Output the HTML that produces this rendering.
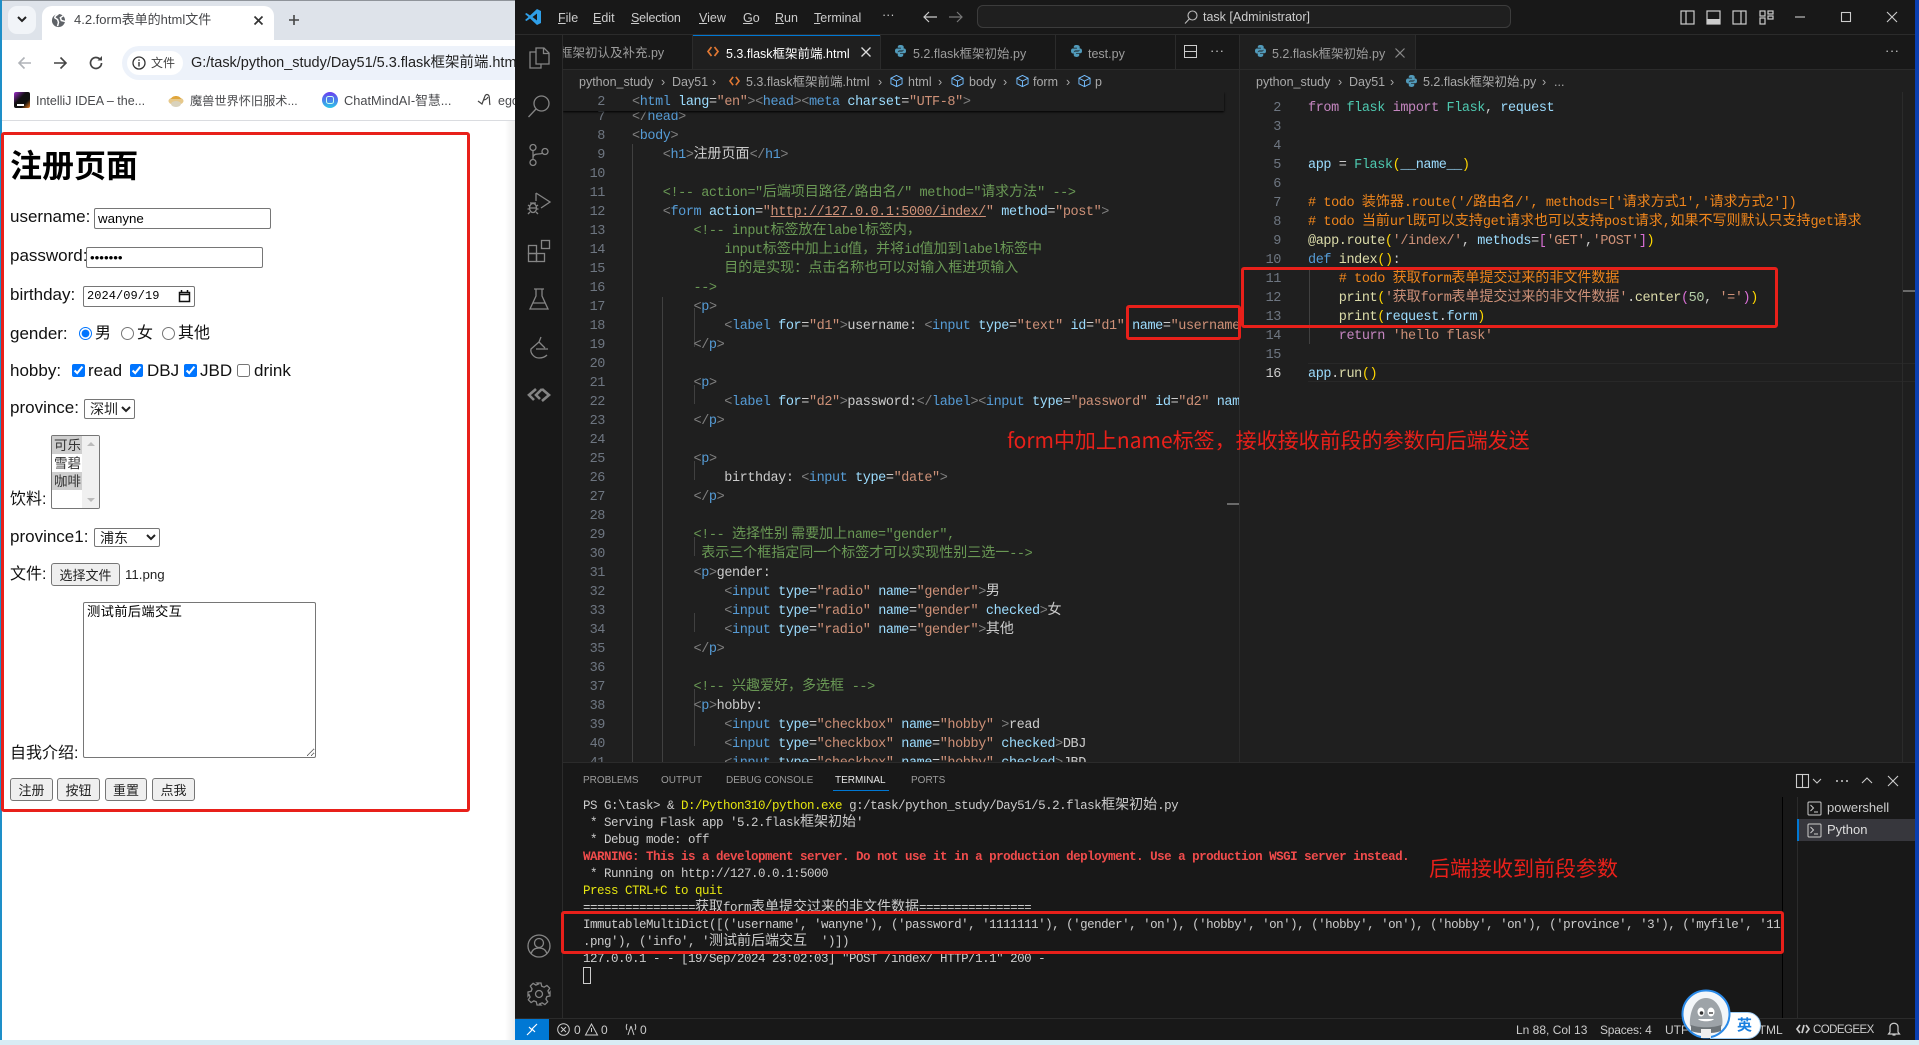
<!DOCTYPE html>
<html lang="zh-CN">
<head>
<meta charset="utf-8">
<title>4.2.form表单的html文件</title>
<style>
html,body{margin:0;padding:0}
body{position:relative;width:1919px;height:1045px;overflow:hidden;background:#d8ecf4;font-family:"Liberation Sans","Noto Sans CJK SC",sans-serif}
.p{position:absolute}
.t{position:absolute;white-space:nowrap}
svg{position:absolute;overflow:visible}
i{font-style:normal}
/* chrome */
.ct{font-size:13px;line-height:20px;color:#48494c}
.f{font-size:17px;line-height:24px;color:#111}
input,select,textarea,button{position:absolute;margin:0;box-sizing:border-box;font-family:"Liberation Sans","Noto Sans CJK SC",sans-serif}
input[type=text],input[type=password]{border:1px solid #767676;border-radius:2px;padding:1px 3px;font-size:13.3px;background:#fff;color:#000}
input[type=radio],input[type=checkbox]{width:13px;height:13px;accent-color:#0075ff}
select{border:1px solid #767676;border-radius:2px;background:#fff;font-size:14px;color:#222;padding:0 0 0 1px}
button{border:1px solid #767676;border-radius:3px;background:#efefef;font-size:13px;color:#222;padding:0}
/* code */
pre{position:absolute;margin:0;white-space:pre}
.cd{font-family:"Liberation Mono","Noto Sans CJK SC",monospace;font-size:13.5px;letter-spacing:-.41px;line-height:19px;color:#ccc}
.cd i{font-family:"Noto Sans CJK SC",sans-serif;font-size:14px;letter-spacing:0;line-height:0}
.ln{font-family:"Liberation Mono",monospace;font-size:13.5px;letter-spacing:-.41px;line-height:19px;color:#6e7681;text-align:right;position:absolute;margin:0;white-space:pre}
.b{color:#808080}.g{color:#569cd6}.a{color:#9cdcfe}.s{color:#ce9178}.c{color:#6a9955}
.k{color:#c586c0}.h{color:#4ec9b0}.y{color:#dcdcaa}.o{color:#f0861c}.n{color:#b5cea8}.d{color:#ffd700}.e{color:#da70d6}
.tm{font-family:"Liberation Mono","Noto Sans CJK SC",monospace;font-size:12.5px;letter-spacing:-.5px;line-height:17px;color:#ccc}
.tm i{font-family:"Noto Sans CJK SC",sans-serif;font-size:14px;letter-spacing:0;line-height:0}
.r{color:#f14c4c;font-weight:bold}.yl{color:#e5e510}
.tab{font-size:12.5px;line-height:20px;color:#9d9d9d}
.bc{font-size:12.5px;line-height:18px;color:#a9a9a9}
.mn{font-size:12.5px;line-height:18px;color:#cccccc}
.pt{font-size:10px;line-height:14px;color:#9d9d9d}
.st{font-size:12px;line-height:16px;color:#ccc}
.rb{position:absolute;box-sizing:border-box;border:3px solid #e8201a;border-radius:3px}
.an{position:absolute;white-space:nowrap;color:#e8201a;font-family:"Noto Sans CJK SC",sans-serif}
.ig{position:absolute;width:1px;background:#404040}
</style>
</head>
<body>

<!-- Desktop strips -->
<div class="p" style="left:0;top:0;width:2px;height:1040px;background:#1e8fc8"></div>
<div class="p" style="left:1915px;top:0;width:4px;height:1040px;background:#0a3fb0"></div>

<!-- Chrome window -->
<div class="p" style="left:2px;top:0;width:513px;height:1040px;background:#fff"></div>
<div class="p" style="left:2px;top:0;width:513px;height:40px;background:#dee3ea;border-top:1px solid #8f949a;box-sizing:border-box"></div>
<div class="p" style="left:8px;top:6px;width:28px;height:28px;background:#f1f4f8;border-radius:9px"></div>
<svg style="left:16px;top:15px" width="12" height="9" viewBox="0 0 12 9"><path d="M2 2l4 4 4-4" fill="none" stroke="#222" stroke-width="2"/></svg>
<div class="p" style="left:42px;top:6px;width:232px;height:34px;background:#fff;border-radius:10px 10px 0 0"></div>
<svg style="left:51px;top:13px" width="15" height="15" viewBox="0 0 16 16"><circle cx="8" cy="8" r="7" fill="#5f6368"/><path d="M8 1c-2 1-4 2-4 4l3 2 1 3-1 4M13 3l-3 2 1 3 4 1" fill="none" stroke="#fff" stroke-width="1.6"/></svg>
<div class="t ct" style="left:74px;top:10px;font-size:13px;color:#46474a">4.2.form表单的html文件</div>
<svg style="left:253px;top:15px" width="11" height="11" viewBox="0 0 11 11"><path d="M1.5 1.5l8 8M9.5 1.5l-8 8" stroke="#333" stroke-width="1.7"/></svg>
<svg style="left:288px;top:14px" width="12" height="12" viewBox="0 0 12 12"><path d="M6 1v10M1 6h10" stroke="#444" stroke-width="1.6"/></svg>
<svg style="left:16px;top:54px" width="18" height="18" viewBox="0 0 18 18"><path d="M15 9H3.5M8.5 3.5L3 9l5.5 5.5" fill="none" stroke="#b0b3b8" stroke-width="1.6"/></svg>
<svg style="left:51px;top:54px" width="18" height="18" viewBox="0 0 18 18"><path d="M3 9h11.5M9.5 3.5L15 9l-5.500 5.500" fill="none" stroke="#444" stroke-width="1.6"/></svg>
<svg style="left:87px;top:54px" width="18" height="18" viewBox="0 0 18 18"><path d="M14.500 9a5.500 5.500 0 1 1-1.600-3.900" fill="none" stroke="#444" stroke-width="1.7"/><path d="M15 2v4.500h-4.500z" fill="#444"/></svg>
<div class="p" style="left:122px;top:46px;width:393px;height:34px;background:#edf2fa;border-radius:17px 0 0 17px"></div>
<div class="p" style="left:127px;top:51px;width:56px;height:24px;background:#fff;border-radius:12px"></div>
<svg style="left:132px;top:56px" width="14" height="14" viewBox="0 0 14 14"><circle cx="7" cy="7" r="6" fill="none" stroke="#333" stroke-width="1.300"/><path d="M7 6v4.500M7 3.500v1.400" stroke="#333" stroke-width="1.400"/></svg>
<div class="t" style="left:151px;top:53px;font-size:12px;line-height:20px;color:#444">文件</div>
<div class="p" style="left:191px;top:50px;width:324px;height:26px;overflow:hidden"><div class="t" style="left:0;top:1px;font-size:14.500px;line-height:24px;color:#222;letter-spacing:-.02px">G:/task/python_study/Day51/5.3.flask框架前端.html</div></div>
<!-- bookmarks -->
<div class="p" style="left:14px;top:92px;width:16px;height:16px;background:linear-gradient(135deg,#a02bd0,#111 40%,#111 70%,#f08020);border-radius:2px"></div>
<div class="p" style="left:17px;top:104px;width:7px;height:1.500px;background:#fff"></div>
<div class="t ct" style="left:36px;top:91px;font-size:12.500px">IntelliJ IDEA – the...</div>
<svg style="left:168px;top:93px" width="16" height="15" viewBox="0 0 16 15"><ellipse cx="8" cy="8" rx="7.500" ry="4" fill="#e6c88a"/><path d="M3 6c1-4 9-4 10 0z" fill="#e0a63c"/><ellipse cx="8" cy="11" rx="5" ry="3" fill="#d9d2bc"/></svg>
<div class="t ct" style="left:190px;top:91px;font-size:12.200px">魔兽世界怀旧服术...</div>
<svg style="left:322px;top:92px" width="16" height="16" viewBox="0 0 16 16"><defs><linearGradient id="gm" x1="0" y1="0" x2="0" y2="1"><stop offset="0" stop-color="#6a3df0"/><stop offset="1" stop-color="#2bc6e8"/></linearGradient></defs><circle cx="8" cy="8" r="8" fill="url(#gm)"/><rect x="4.500" y="4.500" width="7" height="7" rx="2" fill="none" stroke="#cfe" stroke-width="1"/></svg>
<div class="t ct" style="left:344px;top:91px;font-size:12.800px">ChatMindAI-智慧...</div>
<svg style="left:477px;top:92px" width="15" height="16" viewBox="0 0 15 16"><path d="M1 9l4 3 3-8c1-2 3-2 4 0 1 3 0 6 1 9M6 8c2 0 4-1 5-3" fill="none" stroke="#444" stroke-width="1.200"/></svg>
<div class="p" style="left:498px;top:91px;width:17px;height:20px;overflow:hidden"><div class="t ct" style="left:0;top:0;font-size:12.500px">ego</div></div>
<div class="p" style="left:2px;top:120px;width:513px;height:1px;background:#dadce0"></div>
<div class="p" style="left:505px;top:121px;width:10px;height:919px;background:linear-gradient(90deg,rgba(235,235,235,0),#ececec)"></div>

<!-- Form page -->
<div class="t" style="left:10px;top:140px;font-size:32px;line-height:48px;font-weight:bold;color:#000;font-family:'Noto Sans CJK SC',sans-serif">注册页面</div>

<div class="t f" style="left:10px;top:205px">username:</div>
<input type="text" value="wanyne" style="left:94px;top:208px;width:177px;height:21px">
<div class="t f" style="left:10px;top:244px">password:</div>
<input type="password" value="1111111" style="left:86px;top:247px;width:177px;height:21px">
<div class="t f" style="left:10px;top:283px">birthday:</div>
<div class="p" style="left:83px;top:286px;width:112px;height:21px;box-sizing:border-box;border:1px solid #767676;border-radius:2px;background:#fff"></div>
<div class="t" style="left:87px;top:288px;font-size:12px;line-height:17px;letter-spacing:.05px;font-family:'Liberation Mono',monospace;color:#000">2024/09/19</div>
<svg style="left:178px;top:289px" width="13" height="14" viewBox="0 0 13 14"><path d="M1.500 3.500h10v9h-10zM1.500 5.500h10" fill="none" stroke="#111" stroke-width="1.500"/><path d="M3.500 1v2.500M9.500 1v2.500" stroke="#111" stroke-width="1.500"/></svg>

<div class="t f" style="left:10px;top:322px">gender:</div>
<input type="radio" name="x" checked style="left:79px;top:327px">
<div class="t f" style="left:95px;top:322px;font-size:16px">男</div>
<input type="radio" name="x" style="left:121px;top:327px">
<div class="t f" style="left:137px;top:322px;font-size:16px">女</div>
<input type="radio" name="x" style="left:162px;top:327px">
<div class="t f" style="left:178px;top:322px;font-size:16px">其他</div>

<div class="t f" style="left:10px;top:359px">hobby:</div>
<input type="checkbox" checked style="left:72px;top:364px">
<div class="t f" style="left:88px;top:359px">read</div>
<input type="checkbox" checked style="left:130px;top:364px">
<div class="t f" style="left:147px;top:359px">DBJ</div>
<input type="checkbox" checked style="left:184px;top:364px">
<div class="t f" style="left:200px;top:359px">JBD</div>
<input type="checkbox" style="left:237px;top:364px">
<div class="t f" style="left:254px;top:359px">drink</div>

<div class="t f" style="left:10px;top:396px">province:</div>
<select style="left:84px;top:399px;width:51px;height:20px"><option>深圳</option></select>

<div class="t f" style="left:10px;top:488px;font-size:16px">饮料:</div>
<div class="p" style="left:51px;top:435px;width:49px;height:74px;box-sizing:border-box;border:1px solid #767676;border-radius:2px;background:#fff;overflow:hidden">
  <div class="p" style="left:0;top:0;width:30px;height:18px;background:#cecece"></div>
  <div class="p" style="left:0;top:36px;width:30px;height:18px;background:#cecece"></div>
  <div class="p" style="left:30px;top:0;width:18px;height:74px;background:#f0f0f0"></div>
  <div class="t" style="left:2px;top:1px;font-size:13.500px;line-height:18px;color:#333">可乐</div>
  <div class="t" style="left:2px;top:19px;font-size:13.500px;line-height:18px;color:#333">雪碧</div>
  <div class="t" style="left:2px;top:37px;font-size:13.500px;line-height:18px;color:#333">咖啡</div>
  <div class="p" style="left:35px;top:6px;width:0;height:0;border:4px solid transparent;border-bottom-color:#bbb;border-top:0"></div>
  <div class="p" style="left:35px;top:62px;width:0;height:0;border:4px solid transparent;border-top-color:#bbb;border-bottom:0"></div>
</div>

<div class="t f" style="left:10px;top:525px">province1:</div>
<select style="left:94px;top:528px;width:66px;height:19px"><option>浦东</option></select>

<div class="t f" style="left:10px;top:563px;font-size:16px">文件:</div>
<button style="left:51px;top:563px;width:69px;height:23px">选择文件</button>
<div class="t" style="left:125px;top:566px;font-size:13.300px;line-height:18px;color:#222">11.png</div>

<div class="t f" style="left:10px;top:742px;font-size:16px">自我介绍:</div>
<textarea style="left:83px;top:602px;width:233px;height:156px;border:1px solid #767676;border-radius:2px;padding:2px 3px;font-family:'Liberation Mono','Noto Sans CJK SC',monospace;font-size:13.300px;letter-spacing:.3px;line-height:16px;color:#000;background:#fff">测试前后端交互</textarea>

<button style="left:10px;top:778px;width:43px;height:23px">注册</button>
<button style="left:57px;top:778px;width:43px;height:23px">按钮</button>
<button style="left:105px;top:778px;width:42px;height:23px">重置</button>
<button style="left:152px;top:778px;width:43px;height:23px">点我</button>

<!-- VS Code -->
<div class="p" style="left:515px;top:0;width:1400px;height:1040px;background:#181818"></div>

<!-- title bar -->
<svg style="left:524px;top:8px" width="18" height="18" viewBox="0 0 18 18"><path d="M13 1l4 2v12l-4 2-7-6.500L2.500 13 1 12l3.500-3L1 6l1.500-1L6 7.500zM13 5.500L8.500 9l4.500 3.500z" fill="#2f9fe8"/></svg>
<div class="t mn" style="left:558px;top:9px"><u>F</u>ile</div>
<div class="t mn" style="left:593px;top:9px"><u>E</u>dit</div>
<div class="t mn" style="left:631px;top:9px;letter-spacing:-.2px"><u>S</u>election</div>
<div class="t mn" style="left:699px;top:9px"><u>V</u>iew</div>
<div class="t mn" style="left:743px;top:9px"><u>G</u>o</div>
<div class="t mn" style="left:775px;top:9px"><u>R</u>un</div>
<div class="t mn" style="left:814px;top:9px"><u>T</u>erminal</div>
<div class="t mn" style="left:882px;top:6px">···</div>
<svg style="left:922px;top:10px" width="16" height="14" viewBox="0 0 16 14"><path d="M15 7H2M7 2L2 7l5 5" fill="none" stroke="#ccc" stroke-width="1.200"/></svg>
<svg style="left:948px;top:10px" width="16" height="14" viewBox="0 0 16 14"><path d="M1 7h13M9 2l5 5-5 5" fill="none" stroke="#777" stroke-width="1.200"/></svg>
<div class="p" style="left:977px;top:5px;width:534px;height:23px;box-sizing:border-box;border:1px solid #3c3c3c;border-radius:6px;background:#1f1f1f"></div>
<svg style="left:1184px;top:10px" width="14" height="14" viewBox="0 0 14 14"><circle cx="8.500" cy="5.500" r="4.500" fill="none" stroke="#bbb" stroke-width="1.100"/><path d="M5.200 9L1 13.500" stroke="#bbb" stroke-width="1.100"/></svg>
<div class="t" style="left:1203px;top:8px;font-size:12.500px;line-height:18px;color:#ccc">task [Administrator]</div>
<svg style="left:1680px;top:10px" width="96" height="15" viewBox="0 0 96 15"><g fill="none" stroke="#ccc" stroke-width="1.200"><rect x="1" y="1" width="13" height="13"/><path d="M6 1v13"/><rect x="27" y="1" width="13" height="13"/><rect x="53" y="1" width="13" height="13"/><path d="M61 1v13"/><rect x="80" y="1" width="5" height="5"/><rect x="80" y="8" width="5" height="6"/><rect x="88" y="1" width="5" height="3"/><rect x="88" y="6" width="5" height="3"/></g><rect x="27" y="9" width="13" height="5" fill="#ccc"/></svg>
<svg style="left:1794px;top:9px" width="104" height="16" viewBox="0 0 104 16"><g fill="none" stroke="#ccc" stroke-width="1.100"><path d="M1 8h10"/><rect x="47.500" y="3.500" width="9" height="9"/><path d="M93 3l10 10M103 3L93 13"/></g></svg>
<div class="p" style="left:515px;top:34px;width:1400px;height:1px;background:#2b2b2b"></div>

<!-- activity bar -->
<div class="p" style="left:562px;top:35px;width:1px;height:983px;background:#2b2b2b"></div>
<svg style="left:527px;top:46px" width="24" height="24" viewBox="0 0 24 24" fill="none" stroke="#858585" stroke-width="1.300"><path d="M9 2h8l5 5v11H9zM16.500 2v5.500H22M9 6H3v16h11v-4"/></svg>
<svg style="left:527px;top:94px" width="24" height="24" viewBox="0 0 24 24" fill="none" stroke="#858585" stroke-width="1.300"><circle cx="14.500" cy="9.500" r="7.500"/><path d="M9 15L1.500 23"/></svg>
<svg style="left:527px;top:143px" width="24" height="24" viewBox="0 0 24 24" fill="none" stroke="#858585" stroke-width="1.300"><circle cx="6" cy="4.500" r="3"/><circle cx="6" cy="19.500" r="3"/><circle cx="18" cy="8.500" r="3"/><path d="M6 7.500v9M6 15c0-3 2-4 5-4 3 0 4-.5 5-1"/></svg>
<svg style="left:527px;top:191px" width="24" height="24" viewBox="0 0 24 24" fill="none" stroke="#858585" stroke-width="1.300"><path d="M9 2l14 9-9 6M9 2v8"/><ellipse cx="6" cy="17" rx="3.500" ry="4.500"/><path d="M1 14l2 1.500M11 14l-2 1.500M0.500 18h2M11.500 18h-2M1 23l2-2M11 23l-2-2M3 12l6 0M2.500 17h7"/></svg>
<svg style="left:527px;top:239px" width="24" height="24" viewBox="0 0 24 24" fill="none" stroke="#858585" stroke-width="1.300"><rect x="1.500" y="6.500" width="8" height="8"/><rect x="1.500" y="14.500" width="8" height="8"/><rect x="9.500" y="14.500" width="8" height="8"/><rect x="14.500" y="1.500" width="8" height="8"/></svg>
<svg style="left:527px;top:287px" width="24" height="24" viewBox="0 0 24 24" fill="none" stroke="#858585" stroke-width="1.300"><path d="M7 2h10M9 2v7L3 22h18L15 9V2M5.800 16h12.400"/></svg>
<svg style="left:527px;top:336px" width="24" height="24" viewBox="0 0 24 24" fill="none" stroke="#858585" stroke-width="1.300"><path d="M14 1l-2 5L4 13c-1 4 3 9 8 9 3 0 6-1 8-3M12 6l6 6M9 13h12"/></svg>
<svg style="left:527px;top:383px" width="24" height="24" viewBox="0 0 24 24" fill="none" stroke="#858585" stroke-width="2.600"><path d="M9 6l-7 6 5 5M15 6l7 6-7 6M15 6l-6 6 4 4"/></svg>
<svg style="left:527px;top:934px" width="24" height="24" viewBox="0 0 24 24" fill="none" stroke="#858585" stroke-width="1.300"><circle cx="12" cy="12" r="11"/><circle cx="12" cy="9" r="4.500"/><path d="M4 20c1-4 4-6 8-6s7 2 8 6"/></svg>
<svg style="left:527px;top:982px" width="24" height="24" viewBox="0 0 24 24" fill="none" stroke="#858585" stroke-width="1.300"><circle cx="12" cy="12" r="3.500"/><path d="M10 1h4l.7 3.200 2.400 1 2.800-1.800 2.800 2.800-1.800 2.800 1 2.400L23 10v4l-3.100.6-1 2.400 1.800 2.800-2.800 2.800-2.800-1.800-2.400 1L14 23h-4l-.7-3.200-2.400-1-2.800 1.800-2.800-2.800 1.800-2.800-1-2.400L1 14v-4l3.100-.7 1-2.400L3.300 4.100l2.800-2.800 2.800 1.800 2.400-1z"/></svg>

<!-- Left editor group -->
<div class="p" style="left:563px;top:69px;width:677px;height:693px;background:#1f1f1f"></div>
<div class="p" style="left:563px;top:35px;width:130px;height:34px;overflow:hidden"><div class="t tab" style="left:-3px;top:8px;">框架初认及补充.py</div></div>
<div class="p" style="left:692px;top:35px;width:1px;height:34px;background:#2b2b2b"></div>
<div class="p" style="left:693px;top:35px;width:187px;height:34px;background:#1f1f1f;border-top:1px solid #0078d4;box-sizing:border-box"></div>
<svg style="left:707px;top:46px" width="12" height="11" viewBox="0 0 12 11"><path d="M4.500 1L1 5.500 4.500 10M7.500 1L11 5.500 7.500 10" fill="none" stroke="#e37933" stroke-width="1.700"/></svg>
<div class="t tab" style="left:726px;top:44px;color:#fff">5.3.flask框架前端.html</div>
<svg style="left:861px;top:47px" width="10" height="10" viewBox="0 0 10 10"><path d="M.5.5l9 9M9.500.5l-9 9" stroke="#ddd" stroke-width="1.300"/></svg>
<div class="p" style="left:880px;top:35px;width:1px;height:34px;background:#2b2b2b"></div>
<svg style="left:895px;top:45px" width="11" height="12" viewBox="0 0 12 13"><path d="M6 0C3 0 3 1.500 3 3h3.500v.8H2C.5 3.800 0 5 0 6.500s.7 2.700 2 2.700h1V8c0-1 .8-2 2-2h3c1 0 1.500-.7 1.500-1.500V2C9.500.8 8 0 6 0zM12 6.500c0-1.500-.5-2.700-2-2.700h-.5V5c0 1.500-1 2-2 2H4.500C3.700 7 3 7.700 3 8.500V11c0 1.200 1.500 2 3 2s3-.8 3-2V9.700H5.500V9H10c1.500 0 2-1 2-2.500z" fill="#519aba"/></svg>
<div class="t tab" style="left:913px;top:44px">5.2.flask框架初始.py</div>
<div class="p" style="left:1055px;top:35px;width:1px;height:34px;background:#2b2b2b"></div>
<svg style="left:1071px;top:45px" width="11" height="12" viewBox="0 0 12 13"><path d="M6 0C3 0 3 1.500 3 3h3.500v.8H2C.5 3.800 0 5 0 6.500s.7 2.700 2 2.700h1V8c0-1 .8-2 2-2h3c1 0 1.500-.7 1.500-1.500V2C9.500.8 8 0 6 0zM12 6.500c0-1.500-.5-2.700-2-2.700h-.5V5c0 1.500-1 2-2 2H4.500C3.700 7 3 7.700 3 8.500V11c0 1.200 1.500 2 3 2s3-.8 3-2V9.700H5.500V9H10c1.500 0 2-1 2-2.500z" fill="#519aba"/></svg>
<div class="t tab" style="left:1088px;top:44px">test.py</div>
<div class="p" style="left:1175px;top:35px;width:1px;height:34px;background:#2b2b2b"></div>
<svg style="left:1184px;top:45px" width="14" height="14" viewBox="0 0 14 14"><rect x=".5" y=".5" width="12" height="12" fill="none" stroke="#ccc"/><path d="M.5 6.500h12" stroke="#ccc"/></svg>
<div class="t" style="left:1210px;top:41px;font-size:13px;line-height:20px;color:#ccc;letter-spacing:.5px">···</div>
<div class="p" style="left:563px;top:69px;width:1352px;height:1px;background:#2b2b2b"></div>

<!-- Left breadcrumbs -->
<div class="t bc" style="left:579px;top:73px">python_study</div><div class="t bc" style="left:661px;top:73px">›</div>
<div class="t bc" style="left:672px;top:73px">Day51</div><div class="t bc" style="left:712px;top:73px">›</div>
<svg style="left:729px;top:76px" width="11" height="10" viewBox="0 0 12 11"><path d="M4.500 1L1 5.500 4.500 10M7.500 1L11 5.500 7.500 10" fill="none" stroke="#e37933" stroke-width="1.700"/></svg>
<div class="t bc" style="left:746px;top:73px">5.3.flask框架前端.html</div><div class="t bc" style="left:878px;top:73px">›</div>
<svg style="left:890px;top:74px" width="13" height="14" viewBox="0 0 14 14"><path d="M7 1l6 3v6l-6 3-6-3V4zM1 4l6 3 6-3M7 7v6" fill="none" stroke="#75beff" stroke-width="1"/></svg>
<div class="t bc" style="left:908px;top:73px">html</div><div class="t bc" style="left:938px;top:73px">›</div>
<svg style="left:951px;top:74px" width="13" height="14" viewBox="0 0 14 14"><path d="M7 1l6 3v6l-6 3-6-3V4zM1 4l6 3 6-3M7 7v6" fill="none" stroke="#75beff" stroke-width="1"/></svg>
<div class="t bc" style="left:969px;top:73px">body</div><div class="t bc" style="left:1003px;top:73px">›</div>
<svg style="left:1016px;top:74px" width="13" height="14" viewBox="0 0 14 14"><path d="M7 1l6 3v6l-6 3-6-3V4zM1 4l6 3 6-3M7 7v6" fill="none" stroke="#75beff" stroke-width="1"/></svg>
<div class="t bc" style="left:1033px;top:73px">form</div><div class="t bc" style="left:1066px;top:73px">›</div>
<svg style="left:1078px;top:74px" width="13" height="14" viewBox="0 0 14 14"><path d="M7 1l6 3v6l-6 3-6-3V4zM1 4l6 3 6-3M7 7v6" fill="none" stroke="#75beff" stroke-width="1"/></svg>
<div class="t bc" style="left:1095px;top:73px">p</div>

<!-- Left code -->
<div class="p" style="left:563px;top:92px;width:677px;height:670px;overflow:hidden">
  <div class="ig" style="left:69px;top:52px;height:618px"></div>
  <div class="ig" style="left:99px;top:205px;height:465px"></div>
  <div class="ig" style="left:131px;top:216px;height:39px"></div>
  <div class="ig" style="left:131px;top:293px;height:19px"></div>
  <div class="ig" style="left:131px;top:369px;height:19px"></div>
  <div class="ig" style="left:131px;top:445px;height:19px"></div>
  <div class="ig" style="left:131px;top:521px;height:19px"></div>
  <div class="ig" style="left:131px;top:597px;height:57px"></div>
  <div class="ig" style="left:131px;top:673px;height:10px"></div>
<pre class="ln" style="left:0;top:16px;width:42px">7
8
9
10
11
12
13
14
15
16
17
18
19
20
21
22
23
24
25
26
27
28
29
30
31
32
33
34
35
36
37
38
39
40
41</pre>
<pre class="cd" style="left:69px;top:16px"><span class="b">&lt;/</span><span class="g">head</span><span class="b">&gt;</span>
<span class="b">&lt;</span><span class="g">body</span><span class="b">&gt;</span>
    <span class="b">&lt;</span><span class="g">h1</span><span class="b">&gt;</span><i>注册页面</i><span class="b">&lt;/</span><span class="g">h1</span><span class="b">&gt;</span>

    <span class="c">&lt;!-- action="<i>后端项目路径</i>/<i>路由名</i>/" method="<i>请求方法</i>" --&gt;</span>
    <span class="b">&lt;</span><span class="g">form</span> <span class="a">action</span>=<span class="s">"<u>http://127.0.0.1:5000/index/</u>"</span> <span class="a">method</span>=<span class="s">"post"</span><span class="b">&gt;</span>
        <span class="c">&lt;!-- input<i>标签放在</i>label<i>标签内，</i></span>
            <span class="c">input<i>标签中加上</i>id<i>值，并将</i>id<i>值加到</i>label<i>标签中</i></span>
            <span class="c"><i>目的是实现：点击名称也可以对输入框进项输入</i></span>
        <span class="c">--&gt;</span>
        <span class="b">&lt;</span><span class="g">p</span><span class="b">&gt;</span>
            <span class="b">&lt;</span><span class="g">label</span> <span class="a">for</span>=<span class="s">"d1"</span><span class="b">&gt;</span>username: <span class="b">&lt;</span><span class="g">input</span> <span class="a">type</span>=<span class="s">"text"</span> <span class="a">id</span>=<span class="s">"d1"</span> <span class="a">name</span>=<span class="s">"username</span>
        <span class="b">&lt;/</span><span class="g">p</span><span class="b">&gt;</span>

        <span class="b">&lt;</span><span class="g">p</span><span class="b">&gt;</span>
            <span class="b">&lt;</span><span class="g">label</span> <span class="a">for</span>=<span class="s">"d2"</span><span class="b">&gt;</span>password:<span class="b">&lt;/</span><span class="g">label</span><span class="b">&gt;&lt;</span><span class="g">input</span> <span class="a">type</span>=<span class="s">"password"</span> <span class="a">id</span>=<span class="s">"d2"</span> <span class="a">nam</span>
        <span class="b">&lt;/</span><span class="g">p</span><span class="b">&gt;</span>

        <span class="b">&lt;</span><span class="g">p</span><span class="b">&gt;</span>
            birthday: <span class="b">&lt;</span><span class="g">input</span> <span class="a">type</span>=<span class="s">"date"</span><span class="b">&gt;</span>
        <span class="b">&lt;/</span><span class="g">p</span><span class="b">&gt;</span>

        <span class="c">&lt;!-- <i>选择性别 需要加上</i>name="gender",</span>
         <span class="c"><i>表示三个框指定同一个标签才可以实现性别三选一</i>--&gt;</span>
        <span class="b">&lt;</span><span class="g">p</span><span class="b">&gt;</span>gender:
            <span class="b">&lt;</span><span class="g">input</span> <span class="a">type</span>=<span class="s">"radio"</span> <span class="a">name</span>=<span class="s">"gender"</span><span class="b">&gt;</span><i>男</i>
            <span class="b">&lt;</span><span class="g">input</span> <span class="a">type</span>=<span class="s">"radio"</span> <span class="a">name</span>=<span class="s">"gender"</span> <span class="a">checked</span><span class="b">&gt;</span><i>女</i>
            <span class="b">&lt;</span><span class="g">input</span> <span class="a">type</span>=<span class="s">"radio"</span> <span class="a">name</span>=<span class="s">"gender"</span><span class="b">&gt;</span><i>其他</i>
        <span class="b">&lt;/</span><span class="g">p</span><span class="b">&gt;</span>

        <span class="c">&lt;!-- <i>兴趣爱好，多选框</i> --&gt;</span>
        <span class="b">&lt;</span><span class="g">p</span><span class="b">&gt;</span>hobby:
            <span class="b">&lt;</span><span class="g">input</span> <span class="a">type</span>=<span class="s">"checkbox"</span> <span class="a">name</span>=<span class="s">"hobby"</span> <span class="b">&gt;</span>read
            <span class="b">&lt;</span><span class="g">input</span> <span class="a">type</span>=<span class="s">"checkbox"</span> <span class="a">name</span>=<span class="s">"hobby"</span> <span class="a">checked</span><span class="b">&gt;</span>DBJ
            <span class="b">&lt;</span><span class="g">input</span> <span class="a">type</span>=<span class="s">"checkbox"</span> <span class="a">name</span>=<span class="s">"hobby"</span> <span class="a">checked</span><span class="b">&gt;</span>JBD</pre>
  <!-- sticky -->
  <div class="p" style="left:0;top:0;width:661px;height:19px;background:#1f1f1f;box-shadow:0 1px 2px #000"></div>
  <pre class="ln" style="left:0;top:1px;width:42px">2</pre>
  <pre class="cd" style="left:69px;top:1px"><span class="b">&lt;</span><span class="g">html</span> <span class="a">lang</span>=<span class="s">"en"</span><span class="b">&gt;&lt;</span><span class="g">head</span><span class="b">&gt;&lt;</span><span class="g">meta</span> <span class="a">charset</span>=<span class="s">"UTF-8"</span><span class="b">&gt;</span></pre>
</div>
<div class="p" style="left:1227px;top:503px;width:12px;height:2px;background:#6a6a6a"></div>
<div class="p" style="left:1239px;top:35px;width:1px;height:727px;background:#2b2b2b"></div>

<!-- Right editor group -->
<div class="p" style="left:1240px;top:70px;width:675px;height:692px;background:#1f1f1f"></div>
<div class="p" style="left:1240px;top:35px;width:175px;height:34px;background:#1f1f1f"></div>
<svg style="left:1255px;top:45px" width="11" height="12" viewBox="0 0 12 13"><path d="M6 0C3 0 3 1.500 3 3h3.500v.8H2C.5 3.800 0 5 0 6.500s.7 2.700 2 2.700h1V8c0-1 .8-2 2-2h3c1 0 1.500-.7 1.500-1.500V2C9.500.8 8 0 6 0zM12 6.500c0-1.500-.5-2.700-2-2.700h-.5V5c0 1.500-1 2-2 2H4.500C3.700 7 3 7.700 3 8.500V11c0 1.200 1.500 2 3 2s3-.8 3-2V9.700H5.500V9H10c1.500 0 2-1 2-2.500z" fill="#519aba"/></svg>
<div class="t tab" style="left:1272px;top:44px">5.2.flask框架初始.py</div>
<svg style="left:1395px;top:48px" width="10" height="10" viewBox="0 0 10 10"><path d="M.5.5l9 9M9.500.5l-9 9" stroke="#888" stroke-width="1.200"/></svg>
<div class="p" style="left:1415px;top:35px;width:1px;height:34px;background:#2b2b2b"></div>
<div class="t" style="left:1885px;top:41px;font-size:13px;line-height:20px;color:#ccc;letter-spacing:.5px">···</div>
<div class="t bc" style="left:1256px;top:73px">python_study</div><div class="t bc" style="left:1338px;top:73px">›</div>
<div class="t bc" style="left:1349px;top:73px">Day51</div><div class="t bc" style="left:1390px;top:73px">›</div>
<svg style="left:1406px;top:75px" width="11" height="12" viewBox="0 0 12 13"><path d="M6 0C3 0 3 1.500 3 3h3.500v.8H2C.5 3.800 0 5 0 6.500s.7 2.700 2 2.700h1V8c0-1 .8-2 2-2h3c1 0 1.500-.7 1.500-1.500V2C9.500.8 8 0 6 0zM12 6.500c0-1.500-.5-2.700-2-2.700h-.5V5c0 1.500-1 2-2 2H4.500C3.700 7 3 7.700 3 8.500V11c0 1.200 1.500 2 3 2s3-.8 3-2V9.700H5.500V9H10c1.500 0 2-1 2-2.500z" fill="#519aba"/></svg>
<div class="t bc" style="left:1423px;top:73px">5.2.flask框架初始.py</div><div class="t bc" style="left:1542px;top:73px">›</div>
<div class="t bc" style="left:1554px;top:73px">...</div>
<div class="p" style="left:1240px;top:92px;width:675px;height:670px;overflow:hidden">
  <div class="p" style="left:68px;top:271px;width:607px;height:19px;box-sizing:border-box;border-top:1px solid #282828;border-bottom:1px solid #282828"></div>
  <div class="ig" style="left:69px;top:176px;height:76px"></div>
<pre class="ln" style="left:0;top:7px;width:41px">2
3
4
5
6
7
8
9
10
11
12
13
14
15
<span style="color:#ccc">16</span></pre>
<pre class="cd" style="left:68px;top:7px"><span class="k">from</span> <span class="h">flask</span> <span class="k">import</span> <span class="h">Flask</span>, <span class="a">request</span>


<span class="a">app</span> = <span class="h">Flask</span><span class="d">(</span><span class="a">__name__</span><span class="d">)</span>

<span class="o"># todo <i>装饰器</i>.route('/<i>路由名</i>/', methods=['<i>请求方式</i>1','<i>请求方式</i>2'])</span>
<span class="o"># todo <i>当前</i>url<i>既可以支持</i>get<i>请求也可以支持</i>post<i>请求</i>,<i>如果不写则默认只支持</i>get<i>请求</i></span>
<span class="y">@app.route</span><span class="d">(</span><span class="s">'/index/'</span>, <span class="a">methods</span>=<span class="e">[</span><span class="s">'GET'</span>,<span class="s">'POST'</span><span class="e">]</span><span class="d">)</span>
<span class="g">def</span> <span class="y">index</span><span class="d">()</span>:
    <span class="o"># todo <i>获取</i>form<i>表单提交过来的非文件数据</i></span>
    <span class="y">print</span><span class="d">(</span><span class="s">'<i>获取</i>form<i>表单提交过来的非文件数据</i>'</span>.<span class="y">center</span><span class="e">(</span><span class="n">50</span>, <span class="s">'='</span><span class="e">)</span><span class="d">)</span>
    <span class="y">print</span><span class="d">(</span><span class="a">request</span>.<span class="a">form</span><span class="d">)</span>
    <span class="k">return</span> <span class="s">'hello flask'</span>

<span class="a">app</span>.<span class="y">run</span><span class="d">()</span></pre>
</div>
<div class="p" style="left:1902px;top:92px;width:1px;height:670px;background:#2b2b2b"></div>
<div class="p" style="left:1903px;top:290px;width:12px;height:2px;background:#6a6a6a"></div>

<!-- Panel -->
<div class="p" style="left:563px;top:762px;width:1352px;height:256px;background:#181818;border-top:1px solid #2b2b2b;box-sizing:border-box"></div>
<div class="t pt" style="left:583px;top:774px">PROBLEMS</div>
<div class="t pt" style="left:661px;top:774px">OUTPUT</div>
<div class="t pt" style="left:726px;top:774px">DEBUG CONSOLE</div>
<div class="t pt" style="left:835px;top:774px;color:#e7e7e7">TERMINAL</div>
<div class="t pt" style="left:911px;top:774px">PORTS</div>
<div class="p" style="left:833px;top:790px;width:56px;height:1px;background:#0078d4"></div>

<pre class="tm" style="left:583px;top:798px">PS G:\task&gt; &amp; <span class="yl">D:/Python310/python.exe</span> g:/task/python_study/Day51/5.2.flask<i>框架初始</i>.py
 * Serving Flask app '5.2.flask<i>框架初始</i>'
 * Debug mode: off
<span class="r">WARNING: This is a development server. Do not use it in a production deployment. Use a production WSGI server instead.</span>
 * Running on http://127.0.0.1:5000
<span class="yl">Press CTRL+C to quit</span>
================<i>获取</i>form<i>表单提交过来的非文件数据</i>================
ImmutableMultiDict([('username', 'wanyne'), ('password', '1111111'), ('gender', 'on'), ('hobby', 'on'), ('hobby', 'on'), ('hobby', 'on'), ('province', '3'), ('myfile', '11
.png'), ('info', '<i>测试前后端交互</i>  ')])
127.0.0.1 - - [19/Sep/2024 23:02:03] "POST /index/ HTTP/1.1" 200 -</pre>
<div class="p" style="left:575px;top:912px;width:860px;height:5px;background:#181818"></div>
<div class="p" style="left:583px;top:967px;width:8px;height:17px;box-sizing:border-box;border:1px solid #ccc"></div>
<div class="p" style="left:1782px;top:797px;width:1px;height:221px;background:#000"></div>
<div class="p" style="left:1797px;top:797px;width:1px;height:221px;background:#2b2b2b"></div>
<div class="p" style="left:1797px;top:819px;width:118px;height:22px;background:#37373d;border-left:2px solid #0078d4;box-sizing:border-box"></div>
<svg style="left:1807px;top:801px" width="15" height="15" viewBox="0 0 15 15" fill="none" stroke="#ccc"><rect x="1" y="1" width="13" height="13" rx="1"/><path d="M3.500 4l3 3-3 3M7 11h4"/></svg>
<div class="t" style="left:1827px;top:799px;font-size:13px;line-height:18px;color:#ccc">powershell</div>
<svg style="left:1807px;top:823px" width="15" height="15" viewBox="0 0 15 15" fill="none" stroke="#ccc"><rect x="1" y="1" width="13" height="13" rx="1"/><path d="M3.500 4l3 3-3 3M7 11h4"/></svg>
<div class="t" style="left:1827px;top:821px;font-size:13px;line-height:18px;color:#ddd">Python</div>
<svg style="left:1796px;top:774px" width="110" height="14" viewBox="0 0 110 14" fill="none" stroke="#ccc" stroke-width="1.100"><rect x=".5" y=".5" width="12" height="13"/><path d="M6.500.5v13M17 5l4 4 4-4"/><path d="M66 9l5-5 5 5M92 2l10 10M102 2L92 12"/><path d="M40 7h2M45 7h2M50 7h2" stroke-width="1.500"/></svg>

<!-- Status bar -->
<div class="p" style="left:515px;top:1018px;width:1400px;height:22px;background:#181818;border-top:1px solid #2b2b2b;box-sizing:border-box"></div>
<div class="p" style="left:515px;top:1019px;width:34px;height:21px;background:#0078d4"></div>
<svg style="left:526px;top:1023px" width="12" height="13" viewBox="0 0 12 13" fill="none" stroke="#fff" stroke-width="1.200"><path d="M1 12l5-5-3-3M11 1L6 6l3 3"/></svg>
<svg style="left:557px;top:1023px" width="13" height="13" viewBox="0 0 13 13" fill="none" stroke="#ccc"><circle cx="6.500" cy="6.500" r="5.800"/><path d="M4 4l5 5M9 4l-5 5"/></svg>
<div class="t st" style="left:574px;top:1022px">0</div>
<svg style="left:585px;top:1023px" width="13" height="13" viewBox="0 0 13 13" fill="none" stroke="#ccc"><path d="M6.500 1l6 11H.5zM6.500 5v4"/></svg>
<div class="t st" style="left:601px;top:1022px">0</div>
<svg style="left:625px;top:1023px" width="12" height="13" viewBox="0 0 12 13" fill="none" stroke="#ccc"><path d="M6 3l3 9M6 3L3 12M2 1c-1 2-1 4 0 6M10 1c1 2 1 4 0 6"/></svg>
<div class="t st" style="left:640px;top:1022px">0</div>
<div class="t st" style="left:1516px;top:1022px">Ln 88, Col 13</div>
<div class="t st" style="left:1600px;top:1022px;letter-spacing:-.2px">Spaces: 4</div>
<div class="t st" style="left:1665px;top:1022px">UTF-8</div>
<div class="t st" style="left:1750px;top:1022px">HTML</div>
<svg style="left:1796px;top:1023px" width="14" height="12" viewBox="0 0 14 12" fill="none" stroke="#ccc" stroke-width="1.700"><path d="M4 2L1 6l3 4M10 2l3 4-3 4M8 2L6 10"/></svg>
<div class="t st" style="left:1813px;top:1022px;font-size:11.500px;letter-spacing:-.55px">CODEGEEX</div>
<svg style="left:1887px;top:1021px" width="14" height="16" viewBox="0 0 14 16" fill="none" stroke="#ccc" stroke-width="1.200"><path d="M3 11V6c0-5 8-5 8 0v5l1.500 2h-11zM5.500 14h3"/></svg>

<!-- QQ IME floating -->
<div class="p" style="left:1710px;top:1012px;width:51px;height:27px;background:#fff;border-radius:0 14px 14px 0;border:1px solid #9fcdf5;box-sizing:border-box"></div>
<div class="t" style="left:1737px;top:1016px;font-size:15px;line-height:20px;color:#1a7fe0;font-weight:bold">英</div>
<svg style="left:1681px;top:989px" width="50" height="50" viewBox="0 0 50 50"><circle cx="25" cy="25" r="23.500" fill="#f3f6f9" stroke="#2a8ae8" stroke-width="2"/><path d="M9 37c-1-8 2-28 16-28s18 20 16 28c-8 5-24 5-32 0z" fill="#9da3a8"/><ellipse cx="20" cy="23" rx="3.500" ry="4.500" fill="#fff"/><ellipse cx="30" cy="23" rx="3.500" ry="4.500" fill="#fff"/><circle cx="20.500" cy="24" r="1.800" fill="#333"/><path d="M28 24h4" stroke="#333" stroke-width="1.300"/><path d="M17 30h16c-2 3-14 3-16 0z" fill="#fff"/><path d="M10 36c8 3 22 3 30 0v6c-8 3-22 3-30 0z" fill="#6f7579"/><rect x="20" y="40" width="10" height="9" fill="#eee"/></svg>

<!-- Red annotation boxes -->
<div class="rb" style="left:1px;top:132px;width:469px;height:680px"></div>
<div class="rb" style="left:1126px;top:305px;width:115px;height:35px"></div>
<div class="rb" style="left:1241px;top:267px;width:537px;height:61px"></div>
<div class="rb" style="left:561px;top:911px;width:1223px;height:43px"></div>
<div class="an" style="left:1007px;top:423px;font-size:21px;line-height:34px">form中加上name标签，接收接收前段的参数向后端发送</div>
<div class="an" style="left:1429px;top:852px;font-size:21px;line-height:32px">后端接收到前段参数</div>

</body>
</html>
